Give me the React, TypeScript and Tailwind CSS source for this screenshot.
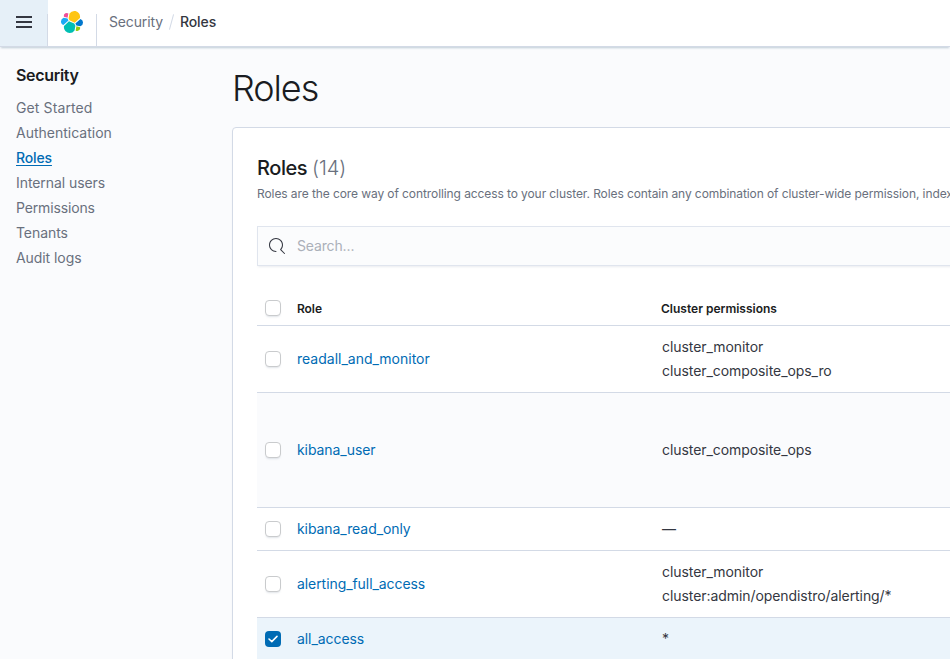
type Role = { name: string; permissions: string[]; height: string; bg: string; tracking?: string; checked?: boolean };

const NAV = [
  { label: 'Get Started', style: 'tracking-[0.008em] text-[#69707d]' },
  { label: 'Authentication', style: 'tracking-[0] text-[#69707d]' },
  { label: 'Roles', style: 'font-medium text-[#006bb4] underline underline-offset-2 decoration-1 tracking-[-0.01em]' },
  { label: 'Internal users', style: 'text-[#69707d]' },
  { label: 'Permissions', style: 'tracking-[-0.01em] text-[#69707d]' },
  { label: 'Tenants', style: 'text-[#69707d]' },
  { label: 'Audit logs', style: 'text-[#69707d]' },
];

const ROLES: Role[] = [
  { name: 'readall_and_monitor', permissions: ['cluster_monitor', 'cluster_composite_ops_ro'], height: 'h-[67px]', bg: 'bg-white', tracking: 'tracking-[0]' },
  { name: 'kibana_user', permissions: ['cluster_composite_ops'], height: 'h-[115px]', bg: 'bg-[#fafbfd]' },
  { name: 'kibana_read_only', permissions: ['—'], height: 'h-[43px]', bg: 'bg-white' },
  { name: 'alerting_full_access', permissions: ['cluster_monitor', 'cluster:admin/opendistro/alerting/*'], height: 'h-[67px]', bg: 'bg-white' },
  { name: 'all_access', permissions: ['*'], height: 'h-[43px]', bg: 'bg-[#ebf4fb]', checked: true },
];

function ElasticLogo() {
  return (
    <svg width="24" height="24" viewBox="0 0 32 32">
      <path fill="#FEC514" d="M12.58 13.787l7.002 3.211 7.066-6.213a7.849 7.849 0 00.152-1.557c0-4.287-3.464-7.764-7.736-7.764a7.73 7.73 0 00-6.38 3.364l-1.176 6.118 1.072 2.841z" />
      <path fill="#00BFB3" d="M5.333 21.215A7.91 7.91 0 005.18 22.8c0 4.3 3.48 7.788 7.773 7.788a7.75 7.75 0 006.417-3.404l1.166-6.094-1.556-2.984-7.03-3.213-6.617 6.322z" />
      <path fill="#F04E98" d="M5.288 9.067l4.8 1.137L11.14 4.73a3.785 3.785 0 00-6.059 3.03c0 .46.05.88.207 1.307z" />
      <path fill="#1BA9F5" d="M4.872 10.214a5.287 5.287 0 00-3.595 4.99c0 2.144 1.32 4.057 3.3 4.816l6.733-6.104-1.236-2.65-5.202-1.052z" />
      <path fill="#93C90E" d="M20.873 27.184a3.755 3.755 0 002.28.768c2.088 0 3.78-1.7 3.78-3.787 0-.46-.08-.907-.235-1.327l-4.796-1.126-1.029 5.472z" />
      <path fill="#0077CC" d="M21.848 20.563l5.28 1.24a5.288 5.288 0 003.596-4.99 5.161 5.161 0 00-3.308-4.813l-6.905 6.068 1.337 2.495z" />
    </svg>
  );
}

function Checkbox({ checked }: { checked?: boolean }) {
  return (
    <div
      className={
        checked
          ? 'flex size-4 items-center justify-center rounded-[4px] bg-[#006bb4]'
          : 'size-4 rounded-[4px] border border-[#c9cbcd] bg-white shadow-[0_2px_2px_-1px_rgba(152,162,179,0.3)]'
      }
    >
      {checked && (
        <svg width="10" height="8" viewBox="0 0 10 8" fill="none" stroke="white" strokeWidth="1.5" strokeLinecap="round" strokeLinejoin="round">
          <path d="M1 4l2.8 2.6L9 1.4" />
        </svg>
      )}
    </div>
  );
}

export default function App() {
  return (
    <div className="flex h-[659px] w-[950px] flex-col overflow-hidden bg-[#fafbfd] font-['Inter',sans-serif] text-[14px] tracking-[-0.005em] text-[#343741]">
      <header className="z-10 flex h-[47px] shrink-0 items-end border-b border-[#d3dae6] bg-white shadow-[0_2px_2px_-1px_rgba(54,97,126,0.3)]">
        <div className="flex h-[46px] w-12 items-end bg-[#e6f0f8]">
          <button className="flex h-[46px] w-[47px] items-center justify-center">
            <svg width="16" height="12" viewBox="0 0 16 12" fill="#343741" className="mb-[2px] ml-px">
              <path d="M0 0h16v2H0zM0 5h16v2H0zM0 10h16v2H0z" />
            </svg>
          </button>
          <div className="h-8 w-px bg-[#d3dae6]" />
        </div>
        <div className="flex h-[46px] w-12 justify-center pt-[10px]">
          <ElasticLogo />
        </div>
        <div className="h-8 w-px bg-[#d3dae6]" />
        <nav className="flex h-[46px] items-center pb-[3px] pl-3">
          <span className="tracking-[-0.01em] text-[#69707d]">Security</span>
          <span className="mr-2 ml-2 h-4 w-px rotate-[15deg] bg-[#d3dae6]" />
          <span className="font-medium text-[#343741]">Roles</span>
        </nav>
      </header>
      <div className="flex min-h-0 flex-1">
        <aside className="w-[232px] shrink-0 pt-4 pl-4">
          <h2 className="text-[16px] leading-6 font-semibold tracking-[-0.02em] text-[#1a1c21]">Security</h2>
          <ul className="mt-2">
            {NAV.map((item) => (
              <li key={item.label} className="flex h-[25px] items-center">
                <a className={item.style}>{item.label}</a>
              </li>
            ))}
          </ul>
        </aside>
        <main className="flex w-[1000px] shrink-0 flex-col">
          <h1 className="mt-[21px] h-[59px] shrink-0 text-[36px] leading-[40px] font-light tracking-[-0.03em] text-[#1a1c21]">Roles</h1>
          <section className="h-[600px] shrink-0 rounded-[4px] border border-[#d3dae6] bg-white px-6 pt-6 shadow-[0_2px_2px_-1px_rgba(152,162,179,0.3)]">
            <h3 className="text-[20px] leading-8 font-medium tracking-[-0.022em] text-[#1a1c21]">
              Roles <span className="font-light tracking-[-0.005em] text-[#69707d]">(14)</span>
            </h3>
            <p className="mt-px text-[12px] leading-[18px] tracking-[-0.0075em] whitespace-nowrap text-[#69707d]">
              Roles are the core way of controlling access to your cluster. Roles contain any combination of cluster-wide permission, index
            </p>
            <div className="mt-[23px] flex h-10 items-center border border-[#e0e5ee] bg-[#fbfcfd] pl-[11px] shadow-[0_2px_2px_-1px_rgba(152,162,179,0.2)]">
              <svg width="16" height="16" viewBox="0 0 16 16" fill="#343741">
                <path d="M11.271 11.978l3.872 3.873a.502.502 0 00.708 0 .502.502 0 000-.708l-3.565-3.564c2.38-2.747 2.267-6.923-.342-9.532-2.73-2.73-7.17-2.73-9.898 0-2.728 2.729-2.728 7.17 0 9.9a6.955 6.955 0 004.949 2.05.5.5 0 000-1 5.96 5.96 0 01-4.242-1.757 6.01 6.01 0 010-8.486 6.004 6.004 0 018.484 0 6.01 6.01 0 010 8.486.5.5 0 00.034.738z" />
              </svg>
              <span className="ml-3 leading-6 tracking-[-0.01em] text-[#abb0b9]">Search...</span>
            </div>
            <div className="mt-[25px] flex h-[35px] items-center border-b border-[#d3dae6] pl-2 text-[12px] leading-4 font-semibold text-[#1a1c21]">
              <Checkbox />
              <span className="ml-4 w-[364px] pt-[2px]">Role</span>
              <span className="pt-[2px] tracking-[0]">Cluster permissions</span>
            </div>
            {ROLES.map((role) => (
              <div key={role.name} className={`flex items-center border-b border-[#d3dae6] pl-2 leading-6 ${role.height} ${role.bg}`}>
                <Checkbox checked={role.checked} />
                <a className={`ml-4 w-[365px] text-[#006bb4] ${role.tracking ?? ''}`}>{role.name}</a>
                <div>
                  {role.permissions.map((p) => (
                    <div key={p}>{p}</div>
                  ))}
                </div>
              </div>
            ))}
          </section>
        </main>
      </div>
    </div>
  );
}
